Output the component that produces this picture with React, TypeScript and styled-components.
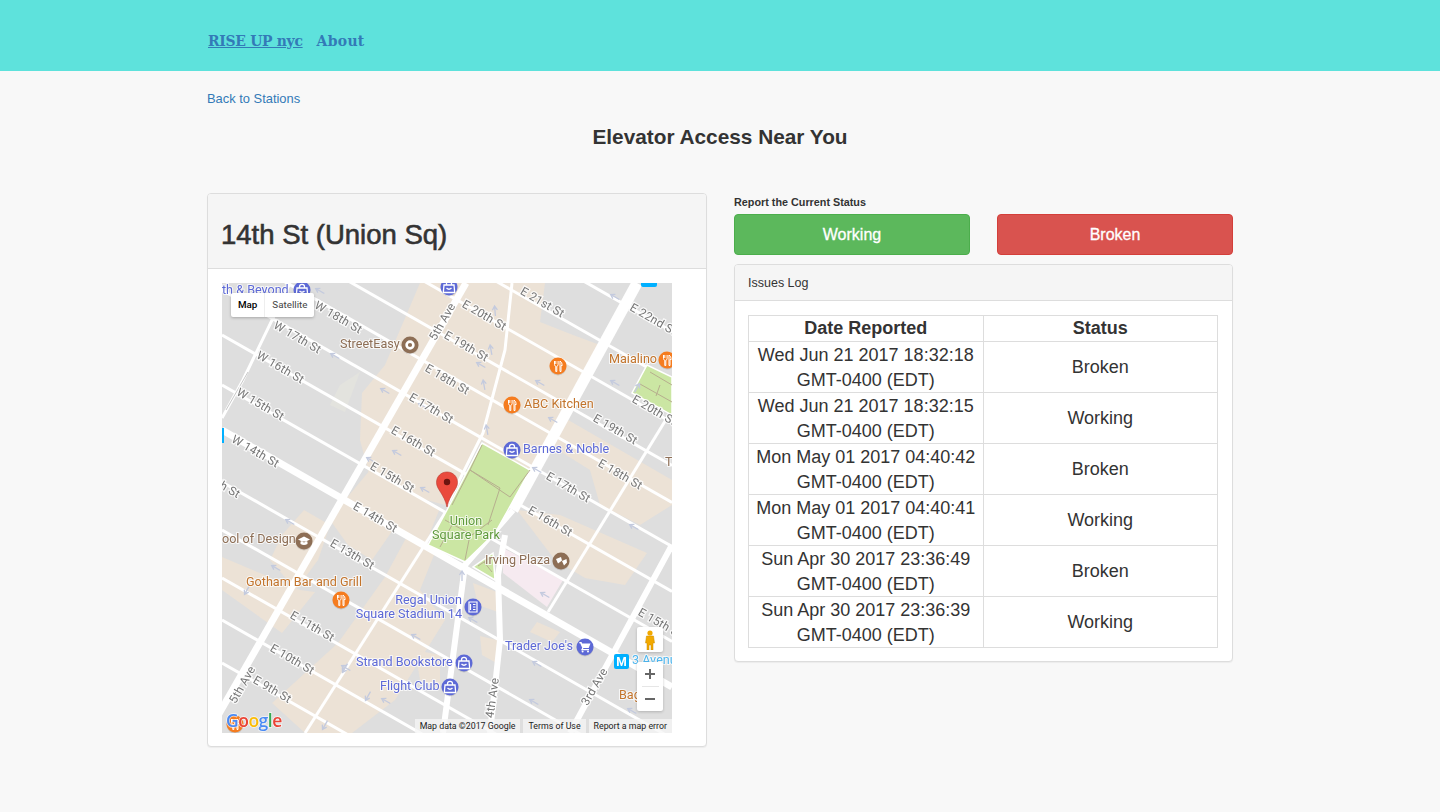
import React from 'react'
import styled, {createGlobalStyle} from 'styled-components'

const GlobalStyle = createGlobalStyle`
  html, body { margin: 0; padding: 0; background: #f8f8f8; }
  body { font-family: "Liberation Sans", Arial, sans-serif; color: #333; height: 812px; overflow: hidden; }
  * { box-sizing: border-box; }
`

const Navbar = styled.nav`
  height: 71px;
  background: #5ee2dc;
  padding: 0 208px;
  display: flex;
  align-items: center;
  gap: 14px;
`
const NavLink = styled.a<{$active?: boolean}>`
  font-family: "DejaVu Serif Condensed", "DejaVu Serif", serif;
  font-weight: 700;
  font-size: 15.5px;
  letter-spacing: ${p => (p.$active ? '-0.3px' : '0.3px')};
  color: #337ab7;
  padding-top: 10px;
  text-decoration: ${p => (p.$active ? 'underline' : 'none')};
`
const Container = styled.main`
  width: 1026px;
  margin: 0 auto;
`
const BackLink = styled.a`
  display: block;
  padding-top: 20px;
  font-size: 12.9px;
  line-height: 15px;
  color: #337ab7;
`
const Title = styled.h2`
  margin: 18px 0 43px;
  text-align: center;
  font-size: 20.8px;
  line-height: 26px;
  font-weight: 700;
  color: #333;
`
const Columns = styled.div`
  display: grid;
  grid-template-columns: 500px 499px;
  column-gap: 27px;
  align-items: start;
`
const Panel = styled.section`
  background: #fff;
  border: 1px solid #ddd;
  border-radius: 4px;
  box-shadow: 0 1px 1px rgba(0, 0, 0, 0.05);
`
const StationHeading = styled.div`
  height: 75px;
  background: #f5f5f5;
  border-bottom: 1px solid #ddd;
  border-radius: 3px 3px 0 0;
  padding: 0 13px;
  display: flex;
  align-items: flex-end;
`
const StationName = styled.h1`
  margin: 0 0 17px;
  font-size: 27.5px;
  line-height: 32px;
  font-weight: 400;
  -webkit-text-stroke: 0.6px #333;
  color: #333;
`
const MapBody = styled.div`
  padding: 14px 14px 13px;
`
const MapFrame = styled.div`
  position: relative;
  width: 450px;
  height: 450px;
  overflow: hidden;
  font-family: Roboto, sans-serif;
`
const MapSvg = styled.svg`
  display: block;
  filter: blur(0.35px);
`
const MapTypeControl = styled.div`
  position: absolute;
  left: 9px;
  top: 10px;
  height: 24px;
  display: flex;
  background: #fff;
  border-radius: 2px;
  box-shadow: 0 1px 3px rgba(0, 0, 0, 0.25);
`
const MapTypeButton = styled.div<{$active?: boolean}>`
  font-size: 9.8px;
  line-height: 24px;
  padding: 0 7px;
  font-weight: ${p => (p.$active ? 500 : 400)};
  color: ${p => (p.$active ? '#000' : '#444')};
  & + & { border-left: 1px solid #eee; }
`
const Pegman = styled.div`
  position: absolute;
  left: 415px;
  top: 344px;
  width: 26px;
  height: 25px;
  background: #fff;
  border-radius: 2px;
  box-shadow: 0 1px 3px rgba(0, 0, 0, 0.2);
  display: flex;
  align-items: center;
  justify-content: center;
`
const ZoomControl = styled.div`
  position: absolute;
  left: 415px;
  top: 379px;
  width: 26px;
  height: 49px;
  background: #fff;
  border-radius: 2px;
  box-shadow: 0 1px 3px rgba(0, 0, 0, 0.2);
  display: flex;
  flex-direction: column;
  align-items: center;
`
const ZoomButton = styled.div`
  flex: 1;
  width: 100%;
  display: flex;
  align-items: center;
  justify-content: center;
`
const ZoomDivider = styled.div`
  width: 17px;
  height: 1px;
  background: #e6e6e6;
`
const Attribution = styled.div`
  position: absolute;
  right: 0;
  bottom: 0;
  height: 14px;
  display: flex;
  gap: 3px;
  font-size: 8.8px;
  line-height: 14px;
  color: #222;
`
const AttributionItem = styled.span`
  background: rgba(245, 245, 245, 0.75);
  padding: 0 5px;
  white-space: nowrap;
`
const SideColumn = styled.div`
  display: flex;
  flex-direction: column;
`
const ReportLabel = styled.div`
  font-size: 10.8px;
  line-height: 12px;
  font-weight: 700;
  color: #333;
  margin: 3px 0 6px;
`
const ButtonRow = styled.div`
  display: grid;
  grid-template-columns: 236px 236px;
  justify-content: space-between;
  margin-bottom: 9px;
`
const StatusButton = styled.button<{$tone: 'ok' | 'bad'}>`
  height: 41px;
  border-radius: 4px;
  border: 1px solid ${p => (p.$tone === 'ok' ? '#4cae4c' : '#d43f3a')};
  background: ${p => (p.$tone === 'ok' ? '#5cb85c' : '#d9534f')};
  color: #fff;
  font-family: inherit;
  font-size: 16px;
  font-weight: 500;
  -webkit-text-stroke: 0.3px #fff;
  padding: 0;
`
const LogHeading = styled.div`
  height: 36px;
  background: #f5f5f5;
  border-bottom: 1px solid #ddd;
  border-radius: 3px 3px 0 0;
  padding: 0 13px;
  font-size: 12.5px;
  line-height: 36px;
  color: #333;
`
const LogBody = styled.div`
  padding: 14px 13px 13px;
`
const LogTable = styled.table`
  width: 470px;
  border-collapse: collapse;
  table-layout: fixed;
  font-size: 18px;
  color: #333;
`
const HeadCell = styled.th`
  height: 26px;
  padding: 0;
  border: 1px solid #ddd;
  font-weight: 700;
  line-height: 25px;
  text-align: center;
`
const Cell = styled.td`
  height: 51px;
  padding: 1px 0 0;
  border: 1px solid #ddd;
  line-height: 24.5px;
  text-align: center;
  vertical-align: middle;
`

const StreetText = styled.text`
  font-family: Roboto, sans-serif;
  font-size: 11.8px;
  letter-spacing: 0.2px;
  fill: #757575;
  stroke: #fff;
  stroke-width: 2.5px;
  stroke-opacity: 0.8;
  paint-order: stroke;
  text-anchor: middle;
  dominant-baseline: middle;
`
const PoiText = styled.text<{$color: string}>`
  font-family: Roboto, sans-serif;
  font-size: 12.6px;
  fill: ${p => p.$color};
  stroke: #fff;
  stroke-width: 2px;
  stroke-opacity: 0.75;
  paint-order: stroke;
  dominant-baseline: middle;
`
const LogoText = styled.text`
  font-family: "Open Sans", sans-serif;
  font-size: 17.5px;
  font-weight: 600;
  letter-spacing: -0.5px;
  stroke: #fff;
  stroke-width: 1.5px;
  stroke-opacity: 0.7;
  paint-order: stroke;
`

const BLUE = '#5d69d6'
const ORANGE = '#c2742c'
const BROWN = '#8d6e55'
const SLOPE = 0.57

// each street is where it meets the left edge of the map
const streets = [75, 125, 166, 209, 246, 290, 335, 385, 482, 530, 578, 620, 663]

const blocks = [
  '420,283 545,283 540,322 573,335 600,345 520,495 482,440 445,505 372,485 360,440 362,393 385,365',
  '345,500 370,470 440,508 425,545 395,527 372,560 348,545 330,520',
  '304,510 330,525 318,560 296,590 270,560 282,535',
  '222,557 300,590 315,592 282,633 222,590',
  '412,527 436,550 420,590 445,620 395,700 352,733 305,733 272,703 338,643 385,577',
  '563,417 672,480 672,505 640,525 600,505 590,470 550,445',
  '517,510 560,515 647,553 625,585 585,578 555,560',
  '473,583 497,592 498,612 478,605',
  '480,636 497,640 500,665 482,655',
  '415,650 440,655 440,690 420,680',
  '537,622 560,632 552,642 530,632',
]

const arrows: [number, number, number][] = [
  [320, 291, 30], [335, 356, 30], [385, 391, 30], [423, 406, 30], [371, 460, 30], [397, 453, 30],
  [425, 490, 30], [481, 365, 30], [509, 408, 30], [540, 383, 30], [553, 420, 30], [495, 311, 85],
  [491, 350, 80], [484, 385, 80], [487, 430, 80], [615, 383, 30], [637, 388, 120], [615, 297, 30],
  [537, 470, 30], [247, 590, 300], [276, 568, 30], [290, 522, 30], [416, 637, 30], [346, 668, 30],
  [386, 701, 30], [368, 696, 300], [345, 668, 300], [325, 725, 300], [462, 576, 90], [473, 620, 30],
  [545, 595, 30], [537, 664, 30], [634, 527, 30], [534, 702, 30], [632, 711, 30],
]

type Glyph = 'fork' | 'bag' | 'cap' | 'ring' | 'film' | 'cart' | 'book'

function PoiIcon({x, y, color, glyph}: {x: number; y: number; color: string; glyph: Glyph}) {
  return (
    <g transform={`translate(${x} ${y})`}>
      <circle r="8.5" cy="1" fill="#000" opacity="0.12" />
      <circle r="8.5" fill={color} />
      {glyph === 'fork' && (
        <path d="M-3.5 -5v3.5q0 1.5 1.3 1.8V5.5h1V.3q1.3-.3 1.3-1.8V-5M-2.2 -5v3M2 5.5V-5q2.2 1 2.2 4.5H3v6z" fill="none" stroke="#fff" strokeWidth="1" />
      )}
      {glyph === 'bag' && <path d="M-5 -2h10l.7 7.5h-11.4zM-2.5 -2v-1.2a2.5 2.5 0 015 0V-2M-2.5 1q2.5 2.5 5 0" fill="none" stroke="#fff" strokeWidth="1.3" />}
      {glyph === 'cap' && <path d="M-6 -1.5L0 -4.5l6 3-6 3zM-3.5 .5V3q3.5 2 7 0V.5" fill="#fff" />}
      {glyph === 'ring' && <circle r="3.4" fill="none" stroke="#fff" strokeWidth="2.6" />}
      {glyph === 'film' && <path d="M-5 -2l5 -2 1 3.5-4 3zM1 0l4.5-2 .5 3.5-3 3z" fill="#fff" />}
      {glyph === 'cart' && (
        <g fill="#fff">
          <path d="M-5.5 -5h2l.7 1.5h8.3l-1.8 4.5h-5.2l-.6 1h6.1v1.2h-8l1.2-2.4-2-4.6h-1.2z" />
          <circle cx="-2.4" cy="4.4" r="1" />
          <circle cx="3" cy="4.4" r="1" />
        </g>
      )}
      {glyph === 'book' && <path d="M-4 -5h8v10h-8zM-2.5 -3v6M0 -2.5h2.5M0 0h2.5M0 2.5h2.5" fill="none" stroke="#fff" strokeWidth="1.2" />}
    </g>
  )
}

function MapDrawing() {
  return (
    <MapSvg width="450" height="450" viewBox="222 283 450 450">
      <rect x="222" y="283" width="450" height="450" fill="#dedede" />
      {blocks.map(points => (
        <polygon key={points} points={points} fill="#ece2d6" />
      ))}
      <polygon points="503,548 563,580 547,607 503,573" fill="#f6eaf0" />
      <polygon points="340,385 360,372 345,412 330,405" fill="#e3e3de" />

      <g stroke="#fff" fill="none">
        {streets.map(b => (
          <line key={b} x1="222" y1={b} x2="672" y2={b + 450 * SLOPE} strokeWidth="3" />
        ))}
        <line x1="222" y1="430" x2="672" y2="687" strokeWidth="7" />
        <line x1="466" y1="283" x2="208" y2="733" strokeWidth="7" />
        <line x1="637" y1="283" x2="513" y2="510" strokeWidth="11" />
        <path d="M513,510 L465,565 L443,733" strokeWidth="6" />
        <path d="M505,535 L498,575 L500,640 L490,733" strokeWidth="6" />
        <line x1="672" y1="545" x2="570" y2="733" strokeWidth="6" />
        <path d="M512,283 L505,350 L483,433 L447,505" strokeWidth="3" />
        <line x1="445" y1="513" x2="305" y2="733" strokeWidth="3" />
        <line x1="670" y1="413" x2="548" y2="612" strokeWidth="3" />
        <path d="M222,418 L243,380 L290,283" strokeWidth="3" />
        <path d="M226,410 L248,372" stroke="#c9c9c9" strokeWidth="1" />
      </g>

      <g fill="#cbe6a3" stroke="#fff" strokeWidth="1.5">
        <polygon points="482,443 530,470 508,510 495,533 465,562 428,545 447,510" />
        <polygon points="493,553 495,580 473,567" />
        <polygon points="647,365 672,377 672,415 632,393" />
      </g>
      <g fill="none" stroke="#b6ae8e" strokeWidth="1">
        <path d="M482,445 L470,470 L500,488 M530,470 L510,497 L470,470 L452,505 M500,488 L488,525 M445,520 L472,535 L492,520 M465,560 L470,535 M440,547 L452,525" />
        <path d="M484,562 L492,572 M478,566 L490,558" />
        <path d="M650,372 L672,385 M640,384 L672,402 M660,385 L656,396" />
      </g>

      <g stroke="#c3cade" strokeWidth="1.3" fill="none">
        {arrows.map(([x, y, a]) => (
          <path key={`${x}-${y}-${a}`} transform={`translate(${x} ${y}) rotate(${a})`} d="M-5 0H5M-1 -2.5L-5 0L-1 2.5" />
        ))}
      </g>

      {([
        ['W 18th St', 338, 318], ['W 17th St', 297, 338], ['W 16th St', 280, 368], ['W 15th St', 260, 405],
        ['W 14th St', 255, 452], ['13th St', 222, 486], ['E 15th St', 392, 478], ['E 16th St', 413, 442],
        ['E 17th St', 431, 409], ['E 18th St', 447, 380], ['E 19th St', 466, 347], ['E 20th St', 484, 316],
        ['E 21st St', 542, 303], ['E 22nd St', 653, 320], ['E 20th St', 654, 411], ['E 19th St', 615, 430],
        ['E 18th St', 620, 475], ['E 17th St', 568, 488], ['E 16th St', 550, 522], ['E 15th St', 660, 624],
        ['E 14th St', 375, 518], ['E 13th St', 352, 555], ['E 11th St', 312, 627], ['E 10th St', 292, 660],
        ['E 9th St', 272, 690],
      ] as [string, number, number][]).map(([label, x, y]) => (
        <StreetText key={`${label}${x}`} x={x} y={y} transform={`rotate(30 ${x} ${y})`}>
          {label}
        </StreetText>
      ))}
      <StreetText x="443" y="322" transform="rotate(-60 443 322)">5th Ave</StreetText>
      <StreetText x="243" y="685" transform="rotate(-60 243 685)">5th Ave</StreetText>
      <StreetText x="493" y="698" transform="rotate(-82 493 698)">4th Ave</StreetText>
      <StreetText x="595" y="687" transform="rotate(-60 595 687)">3rd Ave</StreetText>

      <PoiText $color={BLUE} x="222" y="291">th &amp; Beyond</PoiText>
      <PoiText $color={BROWN} x="340" y="345">StreetEasy</PoiText>
      <PoiText $color={ORANGE} x="609" y="360">Maialino</PoiText>
      <PoiText $color={ORANGE} x="524" y="405">ABC Kitchen</PoiText>
      <PoiText $color={BLUE} x="523" y="450">Barnes &amp; Noble</PoiText>
      <PoiText $color={BROWN} x="222" y="540">ool of Design</PoiText>
      <PoiText $color={ORANGE} x="246" y="583">Gotham Bar and Grill</PoiText>
      <PoiText $color={BLUE} x="462" y="601" textAnchor="end">Regal Union</PoiText>
      <PoiText $color={BLUE} x="462" y="615" textAnchor="end">Square Stadium 14</PoiText>
      <PoiText $color={BLUE} x="356" y="663">Strand Bookstore</PoiText>
      <PoiText $color={BLUE} x="380" y="687">Flight Club</PoiText>
      <PoiText $color={BLUE} x="505" y="647">Trader Joe's</PoiText>
      <PoiText $color={BROWN} x="485" y="561">Irving Plaza</PoiText>
      <PoiText $color="#5f9a3c" x="466" y="522" textAnchor="middle">Union</PoiText>
      <PoiText $color="#5f9a3c" x="466" y="536" textAnchor="middle">Square Park</PoiText>
      <PoiText $color="#4fb7ef" x="632" y="661">3 Avenue</PoiText>
      <PoiText $color={ORANGE} x="619" y="696">Bagels</PoiText>
      <PoiText $color={BROWN} x="665" y="463">T</PoiText>

      <PoiIcon x={302} y={290} color={BLUE} glyph="bag" />
      <PoiIcon x={449} y={287} color={BLUE} glyph="bag" />
      <PoiIcon x={410} y={345} color={BROWN} glyph="ring" />
      <PoiIcon x={558} y={366} color="#f57c1f" glyph="fork" />
      <PoiIcon x={512} y={405} color="#f57c1f" glyph="fork" />
      <PoiIcon x={667} y={360} color="#f57c1f" glyph="fork" />
      <PoiIcon x={512} y={450} color={BLUE} glyph="bag" />
      <PoiIcon x={304} y={541} color={BROWN} glyph="cap" />
      <PoiIcon x={341} y={600} color="#f57c1f" glyph="fork" />
      <PoiIcon x={473} y={607} color={BLUE} glyph="book" />
      <PoiIcon x={464} y={663} color={BLUE} glyph="bag" />
      <PoiIcon x={450} y={687} color={BLUE} glyph="bag" />
      <PoiIcon x={585} y={647} color={BLUE} glyph="cart" />
      <PoiIcon x={561} y={561} color={BROWN} glyph="film" />
      <PoiIcon x={235} y={724} color="#f57c1f" glyph="fork" />

      <rect x="641" y="277" width="16" height="10" rx="2" fill="#00b0ff" />
      <rect x="222" y="428" width="2" height="15" fill="#00b0ff" />
      <rect x="614" y="654" width="15" height="15" rx="2" fill="#00b0ff" />
      <text x="621.5" y="665.5" textAnchor="middle" fill="#fff" fontFamily="Roboto, sans-serif" fontSize="12" fontWeight="700">M</text>

      <path d="M447 472c-6 0-10.500 4.500-10.500 10.500 0 7 7.500 11 10.500 24.500 3-13.500 10.500-17.500 10.500-24.500 0-6-4.500-10.500-10.500-10.500z" fill="#ea4a3d" stroke="#b8382e" strokeWidth=".6" />
      <circle cx="447" cy="482" r="3.200" fill="#6b1510" />

      <LogoText x="226" y="727">
        <tspan fill="#4a8af4">G</tspan>
        <tspan fill="#ea4335">o</tspan>
        <tspan fill="#fbbc05">o</tspan>
        <tspan fill="#4a8af4">g</tspan>
        <tspan fill="#34a853">l</tspan>
        <tspan fill="#ea4335">e</tspan>
      </LogoText>
    </MapSvg>
  )
}

const rows = [
  ['Wed Jun 21 2017 18:32:18', 'Broken'],
  ['Wed Jun 21 2017 18:32:15', 'Working'],
  ['Mon May 01 2017 04:40:42', 'Broken'],
  ['Mon May 01 2017 04:40:41', 'Working'],
  ['Sun Apr 30 2017 23:36:49', 'Broken'],
  ['Sun Apr 30 2017 23:36:39', 'Working'],
]

export default function App() {
  return (
    <>
      <GlobalStyle />
      <Navbar>
        <NavLink $active>RISE UP nyc</NavLink>
        <NavLink>About</NavLink>
      </Navbar>
      <Container>
        <BackLink>Back to Stations</BackLink>
        <Title>Elevator Access Near You</Title>
        <Columns>
          <Panel>
            <StationHeading>
              <StationName>14th St (Union Sq)</StationName>
            </StationHeading>
            <MapBody>
              <MapFrame>
                <MapDrawing />
                <MapTypeControl>
                  <MapTypeButton $active>Map</MapTypeButton>
                  <MapTypeButton>Satellite</MapTypeButton>
                </MapTypeControl>
                <Pegman>
                  <svg width="12" height="20" viewBox="0 0 12 20">
                    <circle cx="6" cy="3" r="2.6" fill="#f2a900" />
                    <path d="M2.500 6h7l1 7H9v7H7v-5H5v5H3v-7H1.500z" fill="#f2a900" stroke="#c98a00" strokeWidth=".5" />
                  </svg>
                </Pegman>
                <ZoomControl>
                  <ZoomButton>
                    <svg width="10" height="10" viewBox="0 0 10 10">
                      <path d="M5 0v10M0 5h10" stroke="#666" strokeWidth="2" />
                    </svg>
                  </ZoomButton>
                  <ZoomDivider />
                  <ZoomButton>
                    <svg width="10" height="10" viewBox="0 0 10 10">
                      <path d="M0 5h10" stroke="#666" strokeWidth="2" />
                    </svg>
                  </ZoomButton>
                </ZoomControl>
                <Attribution>
                  <AttributionItem>Map data ©2017 Google</AttributionItem>
                  <AttributionItem>Terms of Use</AttributionItem>
                  <AttributionItem>Report a map error</AttributionItem>
                </Attribution>
              </MapFrame>
            </MapBody>
          </Panel>
          <SideColumn>
            <ReportLabel>Report the Current Status</ReportLabel>
            <ButtonRow>
              <StatusButton $tone="ok">Working</StatusButton>
              <StatusButton $tone="bad">Broken</StatusButton>
            </ButtonRow>
            <Panel>
              <LogHeading>Issues Log</LogHeading>
              <LogBody>
                <LogTable>
                  <thead>
                    <tr>
                      <HeadCell>Date Reported</HeadCell>
                      <HeadCell>Status</HeadCell>
                    </tr>
                  </thead>
                  <tbody>
                    {rows.map(([date, status]) => (
                      <tr key={date}>
                        <Cell>
                          {date}
                          <br />
                          GMT-0400 (EDT)
                        </Cell>
                        <Cell>{status}</Cell>
                      </tr>
                    ))}
                  </tbody>
                </LogTable>
              </LogBody>
            </Panel>
          </SideColumn>
        </Columns>
      </Container>
    </>
  )
}
